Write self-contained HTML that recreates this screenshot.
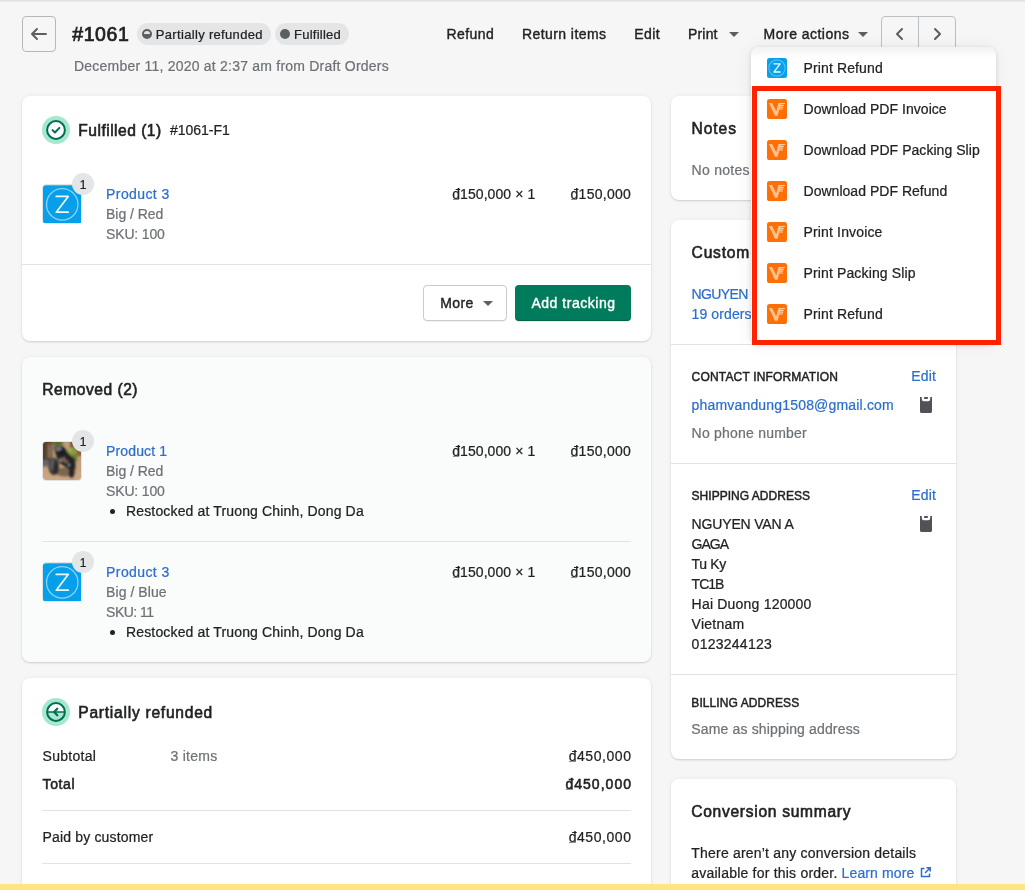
<!DOCTYPE html><html><head><meta charset="utf-8"><title>Order #1061</title><style>html,body{margin:0;padding:0;overflow:hidden}html{width:1025px;height:890px}body{width:1025px;height:890px;overflow:hidden;position:relative;background:#f6f6f7;font-family:"Liberation Sans", sans-serif;color:#202223}.card{position:absolute;background:#fff;border-radius:8px;box-shadow:0 0 5px rgba(23,24,24,.05),0 1px 2px rgba(0,0,0,.15)}svg{position:absolute;display:block}span{-webkit-text-stroke:0.22px currentColor}span.b{-webkit-text-stroke:0}span.sb{-webkit-text-stroke:0.038em currentColor}</style></head><body><div style="position:absolute;left:0;top:0;width:1025px;height:890px;overflow:hidden;will-change:transform"><div style="position:absolute;left:0px;top:0px;width:1025px;height:2px;background:linear-gradient(#d9dadb,#f0f0f1)"></div><div style="position:absolute;left:22px;top:16px;width:34px;height:36px;box-sizing:border-box;border:1px solid #b3b8bd;border-radius:4px"></div><svg style="left:29px;top:24px;" width="20" height="20" viewBox="0 0 20 20"><path d="M17 9H5.414l3.293-3.293a1 1 0 1 0-1.414-1.414l-5 5a1 1 0 0 0 0 1.414l5 5a1 1 0 0 0 1.414-1.414L5.414 11H17a1 1 0 1 0 0-2z" fill="#5c5f62"/></svg><span class="sb" style="position:absolute;left:72.30px;top:20.00px;font-size:19.50px;line-height:28px;font-weight:400;color:#202223;letter-spacing:0.566px;white-space:nowrap;">#1061</span><div style="position:absolute;left:137px;top:23px;width:134px;height:22px;border-radius:11px;background:#e4e5e7"></div><svg style="left:142px;top:29px;" width="10" height="10" viewBox="0 0 10 10"><circle cx="5" cy="5" r="4" fill="none" stroke="#5c5f62" stroke-width="2"/><path d="M1 5a4 4 0 0 0 8 0z" fill="#5c5f62"/></svg><span style="position:absolute;left:155.80px;top:26.00px;font-size:13.00px;line-height:18px;font-weight:400;color:#202223;letter-spacing:0.325px;white-space:nowrap;">Partially refunded</span><div style="position:absolute;left:275px;top:23px;width:74px;height:22px;border-radius:11px;background:#e4e5e7"></div><svg style="left:280px;top:29px;" width="10" height="10" viewBox="0 0 10 10"><circle cx="5" cy="5" r="5" fill="#5c5f62"/></svg><span style="position:absolute;left:294.10px;top:26.00px;font-size:13.00px;line-height:18px;font-weight:400;color:#202223;letter-spacing:0.225px;white-space:nowrap;">Fulfilled</span><span style="position:absolute;left:74.00px;top:56.00px;font-size:14.00px;line-height:20px;font-weight:400;color:#6d7175;letter-spacing:0.221px;white-space:nowrap;">December 11, 2020 at 2:37 am from Draft Orders</span><span style="position:absolute;left:446.60px;top:24.00px;font-size:14.00px;line-height:20px;font-weight:400;color:#202223;letter-spacing:0.409px;white-space:nowrap;-webkit-text-stroke:0.38px currentColor">Refund</span><span style="position:absolute;left:522.00px;top:24.00px;font-size:14.00px;line-height:20px;font-weight:400;color:#202223;letter-spacing:0.422px;white-space:nowrap;-webkit-text-stroke:0.38px currentColor">Return items</span><span style="position:absolute;left:634.30px;top:24.00px;font-size:14.00px;line-height:20px;font-weight:400;color:#202223;letter-spacing:0.425px;white-space:nowrap;-webkit-text-stroke:0.38px currentColor">Edit</span><span style="position:absolute;left:688.00px;top:24.00px;font-size:14.00px;line-height:20px;font-weight:400;color:#202223;letter-spacing:0.176px;white-space:nowrap;-webkit-text-stroke:0.38px currentColor">Print</span><svg style="left:728.5px;top:32.0px;" width="10" height="5" viewBox="0 0 10 5"><path d="M0 0h10L5 5z" fill="#5c5f62"/></svg><span style="position:absolute;left:763.60px;top:24.00px;font-size:14.00px;line-height:20px;font-weight:400;color:#202223;letter-spacing:0.477px;white-space:nowrap;-webkit-text-stroke:0.38px currentColor">More actions</span><svg style="left:857.7px;top:32.0px;" width="10" height="5" viewBox="0 0 10 5"><path d="M0 0h10L5 5z" fill="#5c5f62"/></svg><div style="position:absolute;left:881px;top:16px;width:75px;height:36px;box-sizing:border-box;border:1px solid #babfc3;border-radius:4px"></div><div style="position:absolute;left:918px;top:16px;width:1px;height:36px;background:#babfc3"></div><svg style="left:890px;top:24px;" width="20" height="20" viewBox="0 0 20 20"><path d="M12 16a.997.997 0 0 1-.707-.293l-5-5a.999.999 0 0 1 0-1.414l5-5a.999.999 0 1 1 1.414 1.414L8.414 10l4.293 4.293A.999.999 0 0 1 12 16z" fill="#5c5f62"/></svg><svg style="left:927px;top:24px;" width="20" height="20" viewBox="0 0 20 20"><path d="M8 16a.999.999 0 0 1-.707-1.707L11.586 10 7.293 5.707a.999.999 0 1 1 1.414-1.414l5 5a.999.999 0 0 1 0 1.414l-5 5A.997.997 0 0 1 8 16z" fill="#5c5f62"/></svg><div class="card" style="left:22px;top:96px;width:629px;height:245px"></div><svg style="left:42px;top:116px;" width="28" height="28" viewBox="0 0 28 28"><circle cx="14" cy="14" r="14" fill="#a5e8ce"/><circle cx="14" cy="14" r="8.9" fill="#fff" stroke="#006e52" stroke-width="2"/><path d="M10.500 14.100l2.400 2.400 4.500-4.600" fill="none" stroke="#006e52" stroke-width="2" stroke-linecap="round" stroke-linejoin="round"/></svg><span class="sb" style="position:absolute;left:78.30px;top:120.00px;font-size:15.60px;line-height:22px;font-weight:400;color:#202223;letter-spacing:0.478px;white-space:nowrap;">Fulfilled (1)</span><span style="position:absolute;left:170.10px;top:120.00px;font-size:14.00px;line-height:20px;font-weight:400;color:#202223;letter-spacing:-0.048px;white-space:nowrap;">#1061-F1</span><div style="position:absolute;left:42px;top:184px;width:40px;height:40px;box-sizing:border-box;border:1px solid #e1e3e5;border-radius:4px;background:#fff"></div><svg style="left:42.8px;top:184.7px;" width="38.5" height="38.8" viewBox="0 0 40 40"><rect width="40" height="40" rx="3" fill="#069fe9"/><circle cx="20" cy="20" r="16.3" fill="none" stroke="#fff" stroke-opacity="0.55" stroke-width="1.3"/><path d="M13.800 11.700h12.400L13.800 28.100h12.400" fill="none" stroke="#fff" stroke-opacity=".92" stroke-width="1.8" stroke-linejoin="round" stroke-linecap="round"/></svg><div style="position:absolute;left:72px;top:173px;width:22px;height:22px;border-radius:11px;background:#e4e5e7"></div><span style="position:absolute;left:79.80px;top:177.00px;font-size:12.00px;line-height:17px;font-weight:400;color:#202223;letter-spacing:0.000px;white-space:nowrap;">1</span><span style="position:absolute;left:106.10px;top:184.00px;font-size:14.00px;line-height:20px;font-weight:400;color:#2c6ecb;letter-spacing:0.395px;white-space:nowrap;">Product 3</span><span style="position:absolute;left:106.10px;top:204.00px;font-size:14.00px;line-height:20px;font-weight:400;color:#6d7175;letter-spacing:-0.062px;white-space:nowrap;">Big / Red</span><span style="position:absolute;left:106.10px;top:224.00px;font-size:14.00px;line-height:20px;font-weight:400;color:#6d7175;letter-spacing:-0.177px;white-space:nowrap;">SKU: 100</span><span style="position:absolute;left:452.20px;top:184.00px;font-size:14.00px;line-height:20px;font-weight:400;color:#202223;letter-spacing:0.078px;white-space:nowrap;">đ150,000 × 1</span><div style="position:absolute;left:452.59999999999997px;top:198.79999999999998px;width:6.6px;height:1px;background:#8c9196"></div><span style="position:absolute;left:570.50px;top:184.00px;font-size:14.00px;line-height:20px;font-weight:400;color:#202223;letter-spacing:0.285px;white-space:nowrap;">đ150,000</span><div style="position:absolute;left:570.9px;top:198.79999999999998px;width:6.6px;height:1px;background:#8c9196"></div><div style="position:absolute;left:22px;top:264px;width:629px;height:1px;background:#e1e3e5"></div><div style="position:absolute;left:423px;top:285px;width:84px;height:36px;box-sizing:border-box;border:1px solid #c9cccf;border-radius:4px;background:#fff;box-shadow:0 1px 0 rgba(0,0,0,.05)"></div><span style="position:absolute;left:440.20px;top:293.00px;font-size:14.00px;line-height:20px;font-weight:400;color:#202223;letter-spacing:0.398px;white-space:nowrap;-webkit-text-stroke:0.38px currentColor">More</span><svg style="left:483.2px;top:301.0px;" width="10" height="5" viewBox="0 0 10 5"><path d="M0 0h10L5 5z" fill="#5c5f62"/></svg><div style="position:absolute;left:515px;top:285px;width:116px;height:36px;border-radius:4px;background:#007b5c;box-shadow:0 1px 0 rgba(0,0,0,.08), inset 0 -1px 0 rgba(0,0,0,.2)"></div><span style="position:absolute;left:531.40px;top:293.00px;font-size:14.00px;line-height:20px;font-weight:400;color:#fff;letter-spacing:0.525px;white-space:nowrap;-webkit-text-stroke:0.38px currentColor">Add tracking</span><div class="card" style="left:22px;top:357px;width:629px;height:305px;background:#fafbfb"></div><span class="sb" style="position:absolute;left:42.30px;top:379.00px;font-size:15.60px;line-height:22px;font-weight:400;color:#202223;letter-spacing:0.513px;white-space:nowrap;">Removed (2)</span><div style="position:absolute;left:42px;top:441px;width:40px;height:40px;box-sizing:border-box;border:1px solid #e1e3e5;border-radius:4px;background:#fff"></div><svg style="left:43px;top:442px;" width="38" height="38" viewBox="0 0 38 38"><defs><clipPath id="pc"><rect width="38" height="38" rx="3"/></clipPath><filter id="pb" x="-10%" y="-10%" width="120%" height="120%"><feGaussianBlur stdDeviation="0.8"/></filter><linearGradient id="pg" x1="0" y1="0" x2="0" y2="1"><stop offset="0" stop-color="#b99672"/><stop offset=".45" stop-color="#c29d79"/><stop offset="1" stop-color="#cda783"/></linearGradient></defs><g clip-path="url(#pc)"><rect width="38" height="38" fill="url(#pg)"/><g filter="url(#pb)"><rect x="-2" y="-2" width="11.500" height="23" fill="#54412f"/><rect x="4.500" y="1" width="4" height="15" fill="#85705a"/><rect x="5.200" y="1.500" width="2.200" height="2.500" fill="#8c3a34"/><rect x="-2" y="18" width="7.500" height="6.500" fill="#68656a"/><rect x="20" y="-2" width="8" height="7" fill="#c29c74"/><rect x="27" y="-2" width="13" height="14" fill="#6d4b33"/><rect x="33" y="9" width="6" height="5" fill="#8b5e42"/><ellipse cx="15" cy="1.300" rx="5.500" ry="2.400" fill="#51692a"/><ellipse cx="28.800" cy="10.300" rx="5.300" ry="5.300" fill="#8b9a42"/><ellipse cx="27" cy="8" rx="2" ry="2" fill="#a4b155"/><ellipse cx="31.500" cy="16" rx="2.800" ry="4" fill="#6c8032"/><ellipse cx="22.500" cy="30" rx="10" ry="4.500" fill="#4a3a30" fill-opacity=".6"/><path d="M10.800 4.300l9.700-.3 5 7.500 6.700 5.700.3 9.300-2.500 2.800-7.200-4.300-6.300-4-3.200-6.700z" fill="#232327"/><path d="M12 5.500l5.500-.5 1.500 2.500-5 1.700z" fill="#7b7b86"/><path d="M16 9l4-.8 2 3-4.500 1z" fill="#15151a"/><path d="M17 15.500l8.500 3.200-.8 3.300-8-3.800z" fill="#75605e"/><circle cx="21" cy="16.200" r=".9" fill="#d98a70"/><circle cx="17.500" cy="18.500" r=".8" fill="#d6d2c4"/><circle cx="26" cy="23" r=".9" fill="#b9bcc4"/><ellipse cx="10.800" cy="24.400" rx="5.200" ry="8.600" fill="#353537"/><ellipse cx="9.300" cy="22.500" rx="2.300" ry="6.200" fill="#5b5b5e"/><ellipse cx="12.800" cy="26" rx="2.400" ry="6.500" fill="#2a2a2c"/><ellipse cx="28.600" cy="30.800" rx="2.600" ry="5" fill="#272524"/></g></g></svg><div style="position:absolute;left:72px;top:430px;width:22px;height:22px;border-radius:11px;background:#e4e5e7"></div><span style="position:absolute;left:79.80px;top:434.00px;font-size:12.00px;line-height:17px;font-weight:400;color:#202223;letter-spacing:0.000px;white-space:nowrap;">1</span><span style="position:absolute;left:106.10px;top:441.00px;font-size:14.00px;line-height:20px;font-weight:400;color:#2c6ecb;letter-spacing:0.120px;white-space:nowrap;">Product 1</span><span style="position:absolute;left:106.10px;top:461.00px;font-size:14.00px;line-height:20px;font-weight:400;color:#6d7175;letter-spacing:-0.062px;white-space:nowrap;">Big / Red</span><span style="position:absolute;left:106.10px;top:481.00px;font-size:14.00px;line-height:20px;font-weight:400;color:#6d7175;letter-spacing:-0.177px;white-space:nowrap;">SKU: 100</span><div style="position:absolute;left:110px;top:508.5px;width:5px;height:5px;border-radius:50%;background:#202223"></div><span style="position:absolute;left:126.00px;top:501.00px;font-size:14.00px;line-height:20px;font-weight:400;color:#202223;letter-spacing:0.151px;white-space:nowrap;">Restocked at Truong Chinh, Dong Da</span><span style="position:absolute;left:452.20px;top:441.00px;font-size:14.00px;line-height:20px;font-weight:400;color:#202223;letter-spacing:0.078px;white-space:nowrap;">đ150,000 × 1</span><div style="position:absolute;left:452.59999999999997px;top:456.0px;width:6.6px;height:1px;background:#8c9196"></div><span style="position:absolute;left:570.50px;top:441.00px;font-size:14.00px;line-height:20px;font-weight:400;color:#202223;letter-spacing:0.285px;white-space:nowrap;">đ150,000</span><div style="position:absolute;left:570.9px;top:456.0px;width:6.6px;height:1px;background:#8c9196"></div><div style="position:absolute;left:42px;top:541px;width:589px;height:1px;background:#e1e3e5"></div><div style="position:absolute;left:42px;top:562px;width:40px;height:40px;box-sizing:border-box;border:1px solid #e1e3e5;border-radius:4px;background:#fff"></div><svg style="left:42.8px;top:562.7px;" width="38.5" height="38.8" viewBox="0 0 40 40"><rect width="40" height="40" rx="3" fill="#069fe9"/><circle cx="20" cy="20" r="16.3" fill="none" stroke="#fff" stroke-opacity="0.55" stroke-width="1.3"/><path d="M13.800 11.700h12.400L13.800 28.100h12.400" fill="none" stroke="#fff" stroke-opacity=".92" stroke-width="1.8" stroke-linejoin="round" stroke-linecap="round"/></svg><div style="position:absolute;left:72px;top:551px;width:22px;height:22px;border-radius:11px;background:#e4e5e7"></div><span style="position:absolute;left:79.80px;top:555.00px;font-size:12.00px;line-height:17px;font-weight:400;color:#202223;letter-spacing:0.000px;white-space:nowrap;">1</span><span style="position:absolute;left:106.10px;top:562.00px;font-size:14.00px;line-height:20px;font-weight:400;color:#2c6ecb;letter-spacing:0.395px;white-space:nowrap;">Product 3</span><span style="position:absolute;left:106.10px;top:582.00px;font-size:14.00px;line-height:20px;font-weight:400;color:#6d7175;letter-spacing:0.062px;white-space:nowrap;">Big / Blue</span><span style="position:absolute;left:106.10px;top:602.00px;font-size:14.00px;line-height:20px;font-weight:400;color:#6d7175;letter-spacing:-0.518px;white-space:nowrap;">SKU: 11</span><div style="position:absolute;left:110px;top:629.5px;width:5px;height:5px;border-radius:50%;background:#202223"></div><span style="position:absolute;left:126.00px;top:622.00px;font-size:14.00px;line-height:20px;font-weight:400;color:#202223;letter-spacing:0.151px;white-space:nowrap;">Restocked at Truong Chinh, Dong Da</span><span style="position:absolute;left:452.20px;top:562.00px;font-size:14.00px;line-height:20px;font-weight:400;color:#202223;letter-spacing:0.078px;white-space:nowrap;">đ150,000 × 1</span><div style="position:absolute;left:452.59999999999997px;top:576.8000000000001px;width:6.6px;height:1px;background:#8c9196"></div><span style="position:absolute;left:570.50px;top:562.00px;font-size:14.00px;line-height:20px;font-weight:400;color:#202223;letter-spacing:0.285px;white-space:nowrap;">đ150,000</span><div style="position:absolute;left:570.9px;top:576.8000000000001px;width:6.6px;height:1px;background:#8c9196"></div><div class="card" style="left:22px;top:678px;width:629px;height:260px"></div><svg style="left:42px;top:698px;" width="28" height="28" viewBox="0 0 28 28"><circle cx="14" cy="14" r="14" fill="#a5e8ce"/><path d="M5.100 14a8.900 8.900 0 0 1 17.800 0z" fill="#fff"/><circle cx="14" cy="14" r="8.900" fill="none" stroke="#006e52" stroke-width="2"/><path d="M5 14h18" stroke="#006e52" stroke-width="1.500"/><path d="M15.300 10.700L12.100 14l3.200 3.300" fill="none" stroke="#006e52" stroke-width="2.200" stroke-linecap="round" stroke-linejoin="round"/></svg><span class="sb" style="position:absolute;left:78.30px;top:702.00px;font-size:15.60px;line-height:22px;font-weight:400;color:#202223;letter-spacing:0.741px;white-space:nowrap;">Partially refunded</span><span style="position:absolute;left:42.50px;top:746.00px;font-size:14.00px;line-height:20px;font-weight:400;color:#202223;letter-spacing:0.289px;white-space:nowrap;">Subtotal</span><span style="position:absolute;left:170.50px;top:746.00px;font-size:14.00px;line-height:20px;font-weight:400;color:#6d7175;letter-spacing:0.263px;white-space:nowrap;">3 items</span><span style="position:absolute;left:568.70px;top:746.00px;font-size:14.00px;line-height:20px;font-weight:400;color:#202223;letter-spacing:0.556px;white-space:nowrap;">đ450,000</span><div style="position:absolute;left:569.1px;top:761.0px;width:6.6px;height:1px;background:#8c9196"></div><span class="sb" style="position:absolute;left:42.50px;top:774.00px;font-size:14.00px;line-height:20px;font-weight:400;color:#202223;letter-spacing:0.630px;white-space:nowrap;">Total</span><span class="sb" style="position:absolute;left:565.40px;top:774.00px;font-size:14.00px;line-height:20px;font-weight:400;color:#202223;letter-spacing:1.028px;white-space:nowrap;">đ450,000</span><div style="position:absolute;left:565.8px;top:788.8000000000001px;width:7.2px;height:1px;background:#8c9196"></div><div style="position:absolute;left:42px;top:810px;width:589px;height:1px;background:#e1e3e5"></div><span style="position:absolute;left:42.50px;top:827.00px;font-size:14.00px;line-height:20px;font-weight:400;color:#202223;letter-spacing:0.169px;white-space:nowrap;">Paid by customer</span><span style="position:absolute;left:568.70px;top:827.00px;font-size:14.00px;line-height:20px;font-weight:400;color:#202223;letter-spacing:0.556px;white-space:nowrap;">đ450,000</span><div style="position:absolute;left:569.1px;top:841.6px;width:6.6px;height:1px;background:#8c9196"></div><div style="position:absolute;left:42px;top:863px;width:589px;height:1px;background:#e1e3e5"></div><div class="card" style="left:671px;top:96px;width:285px;height:104px"></div><span class="sb" style="position:absolute;left:691.60px;top:118.00px;font-size:15.60px;line-height:22px;font-weight:400;color:#202223;letter-spacing:0.912px;white-space:nowrap;">Notes</span><span style="position:absolute;left:691.60px;top:160.00px;font-size:14.00px;line-height:20px;font-weight:400;color:#6d7175;letter-spacing:0.279px;white-space:nowrap;">No notes</span><div class="card" style="left:671px;top:220px;width:285px;height:539px"></div><span class="sb" style="position:absolute;left:691.60px;top:242.00px;font-size:15.60px;line-height:22px;font-weight:400;color:#202223;letter-spacing:0.771px;white-space:nowrap;">Custom</span><span class="sb" style="position:absolute;left:750.60px;top:242.00px;font-size:15.60px;line-height:22px;font-weight:400;color:#202223;letter-spacing:0.000px;white-space:nowrap;">er</span><span style="position:absolute;left:691.60px;top:284.00px;font-size:14.00px;line-height:20px;font-weight:400;color:#2c6ecb;letter-spacing:-0.641px;white-space:nowrap;">NGUYEN</span><span style="position:absolute;left:691.60px;top:304.00px;font-size:14.00px;line-height:20px;font-weight:400;color:#2c6ecb;letter-spacing:0.105px;white-space:nowrap;">19 orders</span><div style="position:absolute;left:671px;top:344px;width:285px;height:1px;background:#e1e3e5"></div><span class="sb" style="position:absolute;left:691.60px;top:369.00px;font-size:12.00px;line-height:17px;font-weight:400;color:#202223;letter-spacing:0.171px;white-space:nowrap;">CONTACT INFORMATION</span><span style="position:absolute;left:911.30px;top:366.00px;font-size:14.00px;line-height:20px;font-weight:400;color:#2c6ecb;letter-spacing:0.125px;white-space:nowrap;">Edit</span><span style="position:absolute;left:691.60px;top:395.00px;font-size:14.00px;line-height:20px;font-weight:400;color:#2c6ecb;letter-spacing:0.175px;white-space:nowrap;">phamvandung1508@gmail.com</span><span style="position:absolute;left:691.60px;top:423.00px;font-size:14.00px;line-height:20px;font-weight:400;color:#6d7175;letter-spacing:0.216px;white-space:nowrap;">No phone number</span><div style="position:absolute;left:671px;top:463px;width:285px;height:1px;background:#e1e3e5"></div><span class="sb" style="position:absolute;left:691.60px;top:488.00px;font-size:12.00px;line-height:17px;font-weight:400;color:#202223;letter-spacing:0.025px;white-space:nowrap;">SHIPPING ADDRESS</span><span style="position:absolute;left:911.30px;top:485.00px;font-size:14.00px;line-height:20px;font-weight:400;color:#2c6ecb;letter-spacing:0.125px;white-space:nowrap;">Edit</span><span style="position:absolute;left:691.60px;top:514.00px;font-size:14.00px;line-height:20px;font-weight:400;color:#202223;letter-spacing:-0.164px;white-space:nowrap;">NGUYEN VAN A</span><span style="position:absolute;left:691.60px;top:534.00px;font-size:14.00px;line-height:20px;font-weight:400;color:#202223;letter-spacing:-1.000px;white-space:nowrap;">GAGA</span><span style="position:absolute;left:691.60px;top:554.00px;font-size:14.00px;line-height:20px;font-weight:400;color:#202223;letter-spacing:-0.362px;white-space:nowrap;">Tu Ky</span><span style="position:absolute;left:691.60px;top:574.00px;font-size:14.00px;line-height:20px;font-weight:400;color:#202223;letter-spacing:-0.999px;white-space:nowrap;">TC1B</span><span style="position:absolute;left:691.60px;top:594.00px;font-size:14.00px;line-height:20px;font-weight:400;color:#202223;letter-spacing:0.202px;white-space:nowrap;">Hai Duong 120000</span><span style="position:absolute;left:691.60px;top:614.00px;font-size:14.00px;line-height:20px;font-weight:400;color:#202223;letter-spacing:0.232px;white-space:nowrap;">Vietnam</span><span style="position:absolute;left:691.60px;top:634.00px;font-size:14.00px;line-height:20px;font-weight:400;color:#202223;letter-spacing:0.258px;white-space:nowrap;">0123244123</span><div style="position:absolute;left:671px;top:674px;width:285px;height:1px;background:#e1e3e5"></div><span class="sb" style="position:absolute;left:691.30px;top:695.00px;font-size:12.00px;line-height:17px;font-weight:400;color:#202223;letter-spacing:0.084px;white-space:nowrap;">BILLING ADDRESS</span><span style="position:absolute;left:691.30px;top:719.00px;font-size:14.00px;line-height:20px;font-weight:400;color:#6d7175;letter-spacing:0.152px;white-space:nowrap;">Same as shipping address</span><div class="card" style="left:671px;top:779px;width:285px;height:200px"></div><span class="sb" style="position:absolute;left:691.30px;top:801.00px;font-size:15.60px;line-height:22px;font-weight:400;color:#202223;letter-spacing:0.695px;white-space:nowrap;">Conversion summary</span><span style="position:absolute;left:691.30px;top:843.00px;font-size:14.00px;line-height:20px;font-weight:400;color:#202223;letter-spacing:0.200px;white-space:nowrap;">There aren’t any conversion details</span><span style="position:absolute;left:691.30px;top:863.00px;font-size:14.00px;line-height:20px;font-weight:400;color:#202223;letter-spacing:0.214px;white-space:nowrap;">available for this order.</span><span style="position:absolute;left:841.60px;top:863.00px;font-size:14.00px;line-height:20px;font-weight:400;color:#2c6ecb;letter-spacing:0.123px;white-space:nowrap;">Learn more</span><svg style="left:920px;top:397px;" width="12" height="16" viewBox="0 0 12 16"><path d="M0 0h1.800v2.200a2 2 0 0 0 2 2h4.400a2 2 0 0 0 2-2V0H12v14.400a1.600 1.600 0 0 1-1.600 1.600H1.600A1.600 1.600 0 0 1 0 14.400z" fill="#505257"/><rect x="4.100" y="0.100" width="3.800" height="1.800" rx=".3" fill="#505257"/></svg><svg style="left:920px;top:516px;" width="12" height="16" viewBox="0 0 12 16"><path d="M0 0h1.800v2.200a2 2 0 0 0 2 2h4.400a2 2 0 0 0 2-2V0H12v14.400a1.600 1.600 0 0 1-1.600 1.600H1.600A1.600 1.600 0 0 1 0 14.400z" fill="#505257"/><rect x="4.100" y="0.100" width="3.800" height="1.800" rx=".3" fill="#505257"/></svg><svg style="left:920px;top:867px;" width="11" height="11" viewBox="0 0 11 11"><path d="M4.500 1.500H1.500v8h8V6.500" fill="none" stroke="#2c6ecb" stroke-width="1.5"/><path d="M6.5 .8h3.700v3.700M10 1L5 6" fill="none" stroke="#2c6ecb" stroke-width="1.5"/></svg><div style="position:absolute;left:751px;top:47px;width:245px;height:297px;border-radius:8px;background:linear-gradient(#f2f2f3,#fff 11px);box-shadow:-1px 0 20px rgba(23,24,24,.05),0 1px 5px rgba(23,24,24,.15)"></div><svg style="left:767px;top:58px;" width="20" height="20" viewBox="0 0 40 40"><rect width="40" height="40" rx="5" fill="#069fe9"/><circle cx="20" cy="20" r="16.3" fill="none" stroke="#fff" stroke-opacity="0.32" stroke-width="2.2"/><path d="M13.800 11.700h12.400L13.800 28.100h12.400" fill="none" stroke="#fff" stroke-opacity=".92" stroke-width="2.8" stroke-linejoin="round" stroke-linecap="round"/></svg><span style="position:absolute;left:803.50px;top:58.00px;font-size:14.00px;line-height:20px;font-weight:400;color:#202223;letter-spacing:0.125px;white-space:nowrap;">Print Refund</span><span style="position:absolute;left:803.50px;top:99.00px;font-size:14.00px;line-height:20px;font-weight:400;color:#202223;letter-spacing:0.037px;white-space:nowrap;">Download PDF Invoice</span><svg style="left:767px;top:99px;" width="20" height="20" viewBox="0 0 20 20"><rect width="20" height="20" rx="2.6" fill="#ff6f06"/><g fill="#ffe0c2"><path d="M1.900 3.900H5.100L9.300 12.200 11.400 3.900H14L10.600 16.700H7.900z" fill-opacity=".72"/><path d="M13.500 3.900h4.400v1.100h-4.700zM13.200 5.800h3.600v1.100h-3.900zM12.700 7.600h3.500v1.100h-3.800zM12.200 9.400h3.700v1.100h-4z" fill-opacity=".85"/></g></svg><span style="position:absolute;left:803.50px;top:140.00px;font-size:14.00px;line-height:20px;font-weight:400;color:#202223;letter-spacing:0.046px;white-space:nowrap;">Download PDF Packing Slip</span><svg style="left:767px;top:140px;" width="20" height="20" viewBox="0 0 20 20"><rect width="20" height="20" rx="2.6" fill="#ff6f06"/><g fill="#ffe0c2"><path d="M1.900 3.900H5.100L9.300 12.200 11.400 3.900H14L10.600 16.700H7.900z" fill-opacity=".72"/><path d="M13.500 3.900h4.400v1.100h-4.700zM13.200 5.800h3.600v1.100h-3.900zM12.700 7.600h3.500v1.100h-3.800zM12.200 9.400h3.700v1.100h-4z" fill-opacity=".85"/></g></svg><span style="position:absolute;left:803.50px;top:181.00px;font-size:14.00px;line-height:20px;font-weight:400;color:#202223;letter-spacing:0.028px;white-space:nowrap;">Download PDF Refund</span><svg style="left:767px;top:181px;" width="20" height="20" viewBox="0 0 20 20"><rect width="20" height="20" rx="2.6" fill="#ff6f06"/><g fill="#ffe0c2"><path d="M1.900 3.900H5.100L9.300 12.200 11.400 3.900H14L10.600 16.700H7.900z" fill-opacity=".72"/><path d="M13.500 3.900h4.400v1.100h-4.700zM13.200 5.800h3.600v1.100h-3.900zM12.700 7.600h3.500v1.100h-3.800zM12.200 9.400h3.700v1.100h-4z" fill-opacity=".85"/></g></svg><span style="position:absolute;left:803.50px;top:222.00px;font-size:14.00px;line-height:20px;font-weight:400;color:#202223;letter-spacing:0.154px;white-space:nowrap;">Print Invoice</span><svg style="left:767px;top:222px;" width="20" height="20" viewBox="0 0 20 20"><rect width="20" height="20" rx="2.6" fill="#ff6f06"/><g fill="#ffe0c2"><path d="M1.900 3.900H5.100L9.300 12.200 11.400 3.900H14L10.600 16.700H7.900z" fill-opacity=".72"/><path d="M13.500 3.900h4.400v1.100h-4.700zM13.200 5.800h3.600v1.100h-3.900zM12.700 7.600h3.500v1.100h-3.800zM12.200 9.400h3.700v1.100h-4z" fill-opacity=".85"/></g></svg><span style="position:absolute;left:803.50px;top:263.00px;font-size:14.00px;line-height:20px;font-weight:400;color:#202223;letter-spacing:0.134px;white-space:nowrap;">Print Packing Slip</span><svg style="left:767px;top:263px;" width="20" height="20" viewBox="0 0 20 20"><rect width="20" height="20" rx="2.6" fill="#ff6f06"/><g fill="#ffe0c2"><path d="M1.900 3.900H5.100L9.300 12.200 11.400 3.900H14L10.600 16.700H7.900z" fill-opacity=".72"/><path d="M13.500 3.900h4.400v1.100h-4.700zM13.200 5.800h3.600v1.100h-3.900zM12.700 7.600h3.500v1.100h-3.800zM12.200 9.400h3.700v1.100h-4z" fill-opacity=".85"/></g></svg><span style="position:absolute;left:803.50px;top:304.00px;font-size:14.00px;line-height:20px;font-weight:400;color:#202223;letter-spacing:0.125px;white-space:nowrap;">Print Refund</span><svg style="left:767px;top:304px;" width="20" height="20" viewBox="0 0 20 20"><rect width="20" height="20" rx="2.6" fill="#ff6f06"/><g fill="#ffe0c2"><path d="M1.900 3.900H5.100L9.300 12.200 11.400 3.900H14L10.600 16.700H7.900z" fill-opacity=".72"/><path d="M13.500 3.900h4.400v1.100h-4.700zM13.200 5.800h3.600v1.100h-3.900zM12.700 7.600h3.500v1.100h-3.800zM12.200 9.400h3.700v1.100h-4z" fill-opacity=".85"/></g></svg><div style="position:absolute;left:752px;top:86px;width:249px;height:259px;box-sizing:border-box;border:5px solid #ff2200"></div><div style="position:absolute;left:0px;top:884px;width:1025px;height:6px;background:#fee581"></div></div></body></html>
